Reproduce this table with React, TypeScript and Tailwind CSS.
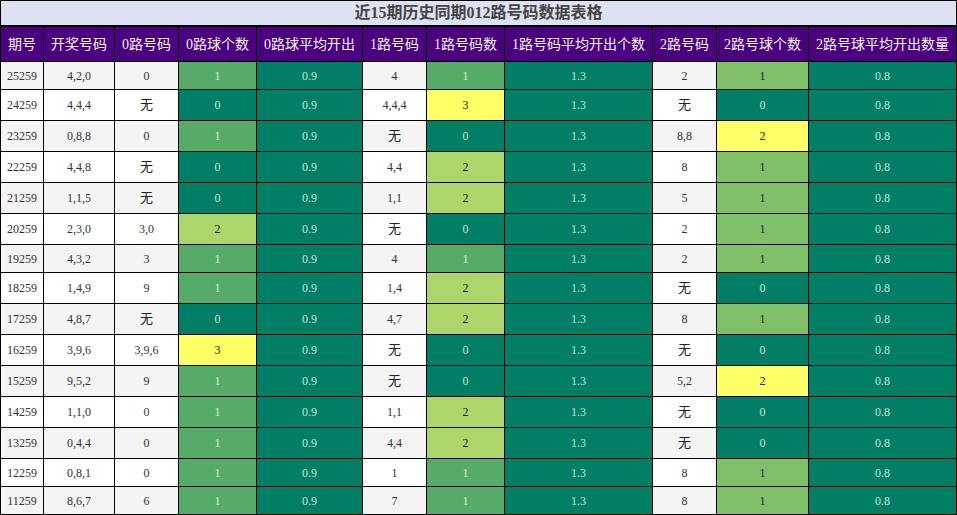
import React from 'react';

type Row = {
  qi: string;
  kj: string;
  h0: string;
  c0: number;
  h1: string;
  c1: number;
  h2: string;
  c2: number;
};

const rows: Row[] = [
  { qi: '25259', kj: '4,2,0', h0: '0', c0: 1, h1: '4', c1: 1, h2: '2', c2: 1 },
  { qi: '24259', kj: '4,4,4', h0: '无', c0: 0, h1: '4,4,4', c1: 3, h2: '无', c2: 0 },
  { qi: '23259', kj: '0,8,8', h0: '0', c0: 1, h1: '无', c1: 0, h2: '8,8', c2: 2 },
  { qi: '22259', kj: '4,4,8', h0: '无', c0: 0, h1: '4,4', c1: 2, h2: '8', c2: 1 },
  { qi: '21259', kj: '1,1,5', h0: '无', c0: 0, h1: '1,1', c1: 2, h2: '5', c2: 1 },
  { qi: '20259', kj: '2,3,0', h0: '3,0', c0: 2, h1: '无', c1: 0, h2: '2', c2: 1 },
  { qi: '19259', kj: '4,3,2', h0: '3', c0: 1, h1: '4', c1: 1, h2: '2', c2: 1 },
  { qi: '18259', kj: '1,4,9', h0: '9', c0: 1, h1: '1,4', c1: 2, h2: '无', c2: 0 },
  { qi: '17259', kj: '4,8,7', h0: '无', c0: 0, h1: '4,7', c1: 2, h2: '8', c2: 1 },
  { qi: '16259', kj: '3,9,6', h0: '3,9,6', c0: 3, h1: '无', c1: 0, h2: '无', c2: 0 },
  { qi: '15259', kj: '9,5,2', h0: '9', c0: 1, h1: '无', c1: 0, h2: '5,2', c2: 2 },
  { qi: '14259', kj: '1,1,0', h0: '0', c0: 1, h1: '1,1', c1: 2, h2: '无', c2: 0 },
  { qi: '13259', kj: '0,4,4', h0: '0', c0: 1, h1: '4,4', c1: 2, h2: '无', c2: 0 },
  { qi: '12259', kj: '0,8,1', h0: '0', c0: 1, h1: '1', c1: 1, h2: '8', c2: 1 },
  { qi: '11259', kj: '8,6,7', h0: '6', c0: 1, h1: '7', c1: 1, h2: '8', c2: 1 },
];

const headers = [
  { t: '期号', w: 'w-[44px] border-l' },
  { t: '开奖号码', w: 'w-[71px]' },
  { t: '0路号码', w: 'w-[64px]' },
  { t: '0路球个数', w: 'w-[78px]' },
  { t: '0路球平均开出', w: 'w-[106px]' },
  { t: '1路号码', w: 'w-[64px]' },
  { t: '1路号码数', w: 'w-[78px]' },
  { t: '1路号码平均开出个数', w: 'w-[148px]' },
  { t: '2路号码', w: 'w-[64px]' },
  { t: '2路号球个数', w: 'w-[92px]' },
  { t: '2路号球平均开出数量', w: 'w-[148px]' },
];

// 0/1 路 columns share one scale, 2 路 has its own (max is 2)
function countCls(n: number, lane2 = false) {
  if (n === 0) return 'bg-[#007f66] text-[#c3e3d6]';
  if (n === 1) return lane2 ? 'bg-[#80c068] text-[#2a2a2a]' : 'bg-[#57ab69] text-[#d2ecd8]';
  if (n === 2) return lane2 ? 'bg-[#ffff66] text-[#222]' : 'bg-[#acd56a] text-[#222]';
  return 'bg-[#ffff66] text-[#222]';
}

const avg = 'bg-[#007f66] text-[#c3e3d6]';

export default function App() {
  return (
    <div className="w-[957px] bg-white font-['Liberation_Serif','Noto_Sans_CJK_SC',serif]">
      {/* Title */}
      <div className="h-[26px] border border-black bg-[#dce2f2] flex items-center justify-center text-[16px] font-bold text-[#444]">
        近15期历史同期012路号码数据表格
      </div>

      <table className="table-fixed w-[957px] border-separate border-spacing-0 text-center">
        <thead>
          <tr className="h-[36px]">
            {headers.map((h) => (
              <th
                key={h.t}
                className={`${h.w} border-t border-b border-r border-black bg-[#4b0080] text-[14px] font-normal text-[#f2f2f2] p-0 whitespace-nowrap`}
              >
                {h.t}
              </th>
            ))}
          </tr>
        </thead>
        <tbody className="text-[12px] text-[#333]">
          {rows.map((r, i) => {
            const tall = [r.h0, r.h1, r.h2].includes('无');
            const base = i % 2 === 0 ? 'bg-[#f4f4f4]' : 'bg-white';
            const cell = 'border-b border-r border-black p-0';
            const txt = (v: string) => (v === '无' ? 'text-[13px] text-[#222]' : '');
            return (
              <tr key={r.qi} className={tall ? 'h-[31px]' : 'h-[28px]'}>
                <td className={`${cell} border-l ${base}`}>{r.qi}</td>
                <td className={`${cell} ${base}`}>{r.kj}</td>
                <td className={`${cell} ${base} ${txt(r.h0)}`}>{r.h0}</td>
                <td className={`${cell} ${countCls(r.c0)}`}>{r.c0}</td>
                <td className={`${cell} ${avg}`}>0.9</td>
                <td className={`${cell} ${base} ${txt(r.h1)}`}>{r.h1}</td>
                <td className={`${cell} ${countCls(r.c1)}`}>{r.c1}</td>
                <td className={`${cell} ${avg}`}>1.3</td>
                <td className={`${cell} ${base} ${txt(r.h2)}`}>{r.h2}</td>
                <td className={`${cell} ${countCls(r.c2, true)}`}>{r.c2}</td>
                <td className={`${cell} ${avg}`}>0.8</td>
              </tr>
            );
          })}
        </tbody>
      </table>
    </div>
  );
}
